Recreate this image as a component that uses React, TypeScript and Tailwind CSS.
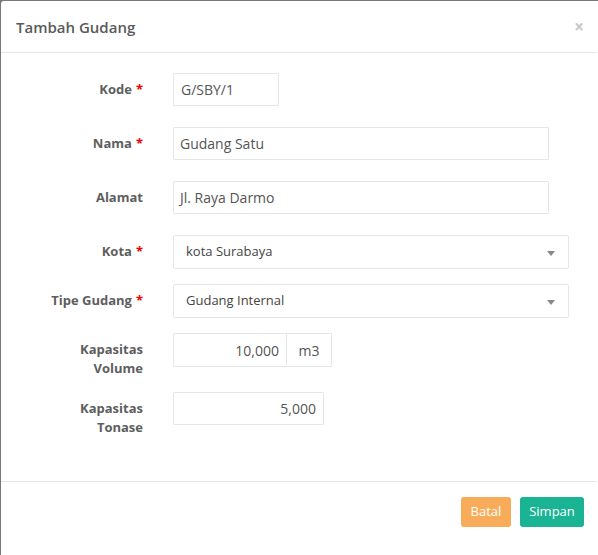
import React from 'react';

function Label({ lines, required }: { lines: string[]; required?: boolean }) {
    return (
        <div className="w-[142px] shrink-0 pt-[7px] text-right text-[13px] leading-[19px] font-bold text-[#5e5e5e]">
            {lines.map((l, i) => (
                <div key={i}>
                    {l}
                    {required && i === lines.length - 1 && <span className="text-[#e00] ml-[4px]">*</span>}
                </div>
            ))}
        </div>
    );
}

function Caret() {
    return (
        <svg width="8" height="5" viewBox="0 0 8 5" className="absolute right-[13px] top-[15px]">
            <path d="M0 0h8L4 5z" fill="#888" />
        </svg>
    );
}

export default function App() {
    const input = 'h-[33px] border border-[#e5e6e7] rounded-[1px] bg-white flex items-center text-[14px] text-[#555]';
    return (
        <div className="w-[598px] h-[555px] bg-[#787878] pl-[1px] pt-[1px] overflow-hidden" style={{ fontFamily: '"Open Sans", sans-serif' }}>
            <div className="bg-white h-[560px] w-[610px] rounded-tl-[3px]">
                <div className="h-[52px] flex items-center justify-between border-b border-[#e5e5e5] w-[596px]">
                    <h1 className="ml-[15px] mt-[2px] text-[15px] font-semibold text-[#5a5a5a]">Tambah Gudang</h1>
                    <span className="mr-[13px] text-[17px] font-bold text-[#c8c8c8] leading-none">×</span>
                </div>

                <div className="pt-[20px] flex flex-col">
                    <div className="flex gap-[30px]">
                        <Label lines={['Kode']} required />
                        <div className={`${input} w-[106px] px-[7px]`}>G/SBY/1</div>
                    </div>
                    <div className="flex gap-[30px] mt-[21px]">
                        <Label lines={['Nama']} required />
                        <div className={`${input} w-[376px] px-[6px]`}>Gudang Satu</div>
                    </div>
                    <div className="flex gap-[30px] mt-[21px]">
                        <Label lines={['Alamat']} />
                        <div className={`${input} w-[376px] px-[6px]`}>Jl. Raya Darmo</div>
                    </div>
                    <div className="flex gap-[30px] mt-[21px]">
                        <Label lines={['Kota']} required />
                        <div className="relative h-[34px] w-[396px] border border-[#e5e6e7] rounded-[2px] flex items-center px-[12px] text-[13px] text-[#444]">
                            kota Surabaya
                            <Caret />
                        </div>
                    </div>
                    <div className="flex gap-[30px] mt-[15px]">
                        <Label lines={['Tipe Gudang']} required />
                        <div className="relative h-[34px] w-[396px] border border-[#e5e6e7] rounded-[2px] flex items-center px-[12px] text-[13px] text-[#444]">
                            Gudang Internal
                            <Caret />
                        </div>
                    </div>
                    <div className="flex gap-[30px] mt-[15px]">
                        <Label lines={['Kapasitas', 'Volume']} />
                        <div className="flex h-[34px]">
                            <div className={`${input} h-[34px] w-[114px] justify-end px-[7px]`}>10,000</div>
                            <div className={`${input} h-[34px] w-[46px] -ml-[1px] justify-center`}>m3</div>
                        </div>
                    </div>
                    <div className="flex gap-[30px] mt-[14px]">
                        <Label lines={['Kapasitas', 'Tonase']} />
                        <div className={`${input} w-[151px] justify-end px-[7px]`}>5,000</div>
                    </div>
                </div>

                <div className="mt-[44px] w-[596px] border-t border-[#e5e5e5] flex justify-end gap-[9px] pt-[15px] pr-[13px]">
                    <button className="h-[30px] w-[50px] rounded-[3px] bg-[#f8ac59] text-white text-[13px]">Batal</button>
                    <button className="h-[30px] w-[64px] rounded-[3px] bg-[#1ab394] text-white text-[13px]">Simpan</button>
                </div>
            </div>
        </div>
    );
}
